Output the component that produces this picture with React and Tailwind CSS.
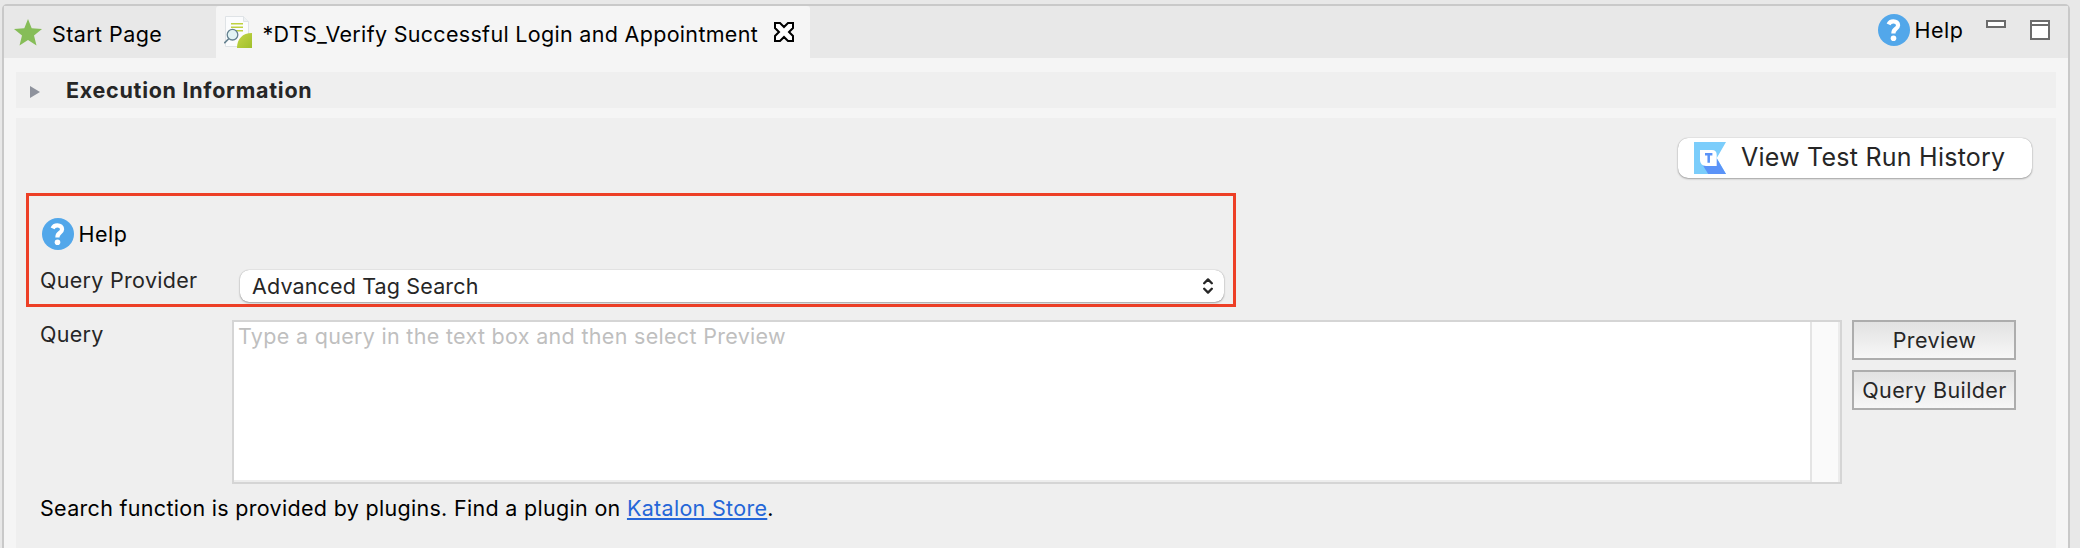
import React from "react";

function HelpIcon() {
  return (
    <svg viewBox="0 0 32 32" className="size-8 shrink-0">
      <circle cx="16" cy="16" r="16" fill="#52a7ea" />
      <path d="M10.600 10.400C11.400 8.400 13 7.400 15.400 7.400c2.900 0 4.700 1.500 4.700 3.800 0 1.800-1 2.700-2.500 3.800-1.700 1.200-2.200 2-2.200 4.400" fill="none" stroke="#fff" strokeWidth="4.200" />
      <circle cx="15.500" cy="24.300" r="2.800" fill="#fff" />
    </svg>
  );
}

function HelpLink() {
  return (
    <div className="flex items-center gap-[4.5px]">
      <HelpIcon />
      <span className="tracking-[0.5px] text-black">Help</span>
    </div>
  );
}

function StarIcon() {
  return (
    <svg viewBox="0 0 28 27" className="-mt-px h-[27px] w-7 shrink-0">
      <path d="M14 0l3.700 9.300 10.300.700-8 6.500 2.500 9.900L14 21l-8.500 5.400L8 16.500 0 10l10.300-.7z" fill="#86bd58" />
    </svg>
  );
}

function ReportIcon() {
  return (
    <svg viewBox="0 0 30 34" className="-mt-[5px] h-[34px] w-[30px] shrink-0">
      <defs>
        <linearGradient id="leaf" x1="0" y1="0" x2="1" y2="1">
          <stop offset="0" stopColor="#c5d647" />
          <stop offset="1" stopColor="#a0bf2c" />
        </linearGradient>
      </defs>
      <path d="M1.500 1.500H19.500L24.500 6.500V31.500H1.500z" fill="#fbfcfd" stroke="#dfe3e6" />
      <path d="M19.500 1.500V6.500H24.500" fill="#eef1f2" stroke="#dfe3e6" />
      <path d="M7 8.700H19M7 12.300H19M12 15.700H19" stroke="#bfd13f" strokeWidth="1.500" />
      <circle cx="8.500" cy="19.700" r="5.300" fill="#e2f3f3" stroke="#64808f" strokeWidth="1.300" />
      <path d="M4.700 23.700L.3 28.200" stroke="#64808f" strokeWidth="1.600" />
      <path d="M13 33C13 24 18.500 18 28 18V33z" fill="url(#leaf)" />
    </svg>
  );
}

function CloseIcon() {
  return (
    <svg viewBox="0 0 20 20" className="mt-0.5 size-5 shrink-0">
      <path d="M1 1H6L10 5L14 1H19V6L15 10L19 14V19H14L10 15L6 19H1V14L5 10L1 6z" fill="#fff" stroke="#000" strokeWidth="2" />
    </svg>
  );
}

function TestOpsIcon() {
  return (
    <svg viewBox="0 0 32 32" className="size-8 shrink-0">
      <path d="M0 0H32L22.800 16L32 32H0z" fill="#7bcdfb" />
      <path d="M9 23.500L14.200 32H32L22.800 16.500z" fill="#5b93f8" />
      <path d="M6 8H18Q22.700 8 22.700 13V24H12Q6 23.500 6 18z" fill="#fff" />
      <path d="M11 12.300H18.400M14.700 12.300V20.800" stroke="#5b93f8" strokeWidth="2.500" />
    </svg>
  );
}

function PlainButton({ children }) {
  return (
    <button className="flex h-10 w-[164px] items-center justify-center border-2 border-[#adadad] bg-linear-to-b from-[#e2e2e2] to-[#f7f7f7] pl-px tracking-[0.42px]">
      {children}
    </button>
  );
}

function TabBar() {
  return (
    <header className="flex h-[52px] shrink-0 bg-[#e8e8e8] text-black">
      <div className="flex w-[212px] pt-3.5 pl-2.5">
        <StarIcon />
        <span className="ml-2.5 tracking-[0.42px]">Start Page</span>
      </div>
      <div className="flex w-[594px] rounded-t-[3px] bg-[#f5f5f5] pt-3.5 pl-2">
        <ReportIcon />
        <span className="ml-[8.5px] w-[511.5px] tracking-[0.31px]">*DTS_Verify Successful Login and Appointment</span>
        <CloseIcon />
      </div>
      <div className="ml-auto flex items-start pt-2 pr-[18px]">
        <div className="w-[108px]">
          <HelpLink />
        </div>
        <div className="mt-1.5 mr-6 h-2 w-5 border-2 border-[#6b6b6b] bg-white" />
        <div className="mt-1.5 size-5 border-2 border-[#6b6b6b] bg-white">
          <div className="mt-0.5 h-0.5 bg-[#6b6b6b]" />
        </div>
      </div>
    </header>
  );
}

export default function App() {
  return (
    <div className="h-[548px] w-[2080px] overflow-hidden bg-[#e8e8e8] pt-1 pr-2.5 pl-0.5 font-['Inter','Liberation_Sans',sans-serif] text-[21.5px] leading-7 whitespace-nowrap text-[#262626]">
      <div className="flex h-[560px] flex-col rounded-t-[5px] border-2 border-[#c9c9c9] bg-[#f5f5f5]">
        <TabBar />
        <section className="mx-3 mt-3.5 flex h-9 shrink-0 items-center bg-[#efefef] pl-3.5">
          <svg viewBox="0 0 10 12" className="mt-[3px] h-3 w-2.5">
            <path d="M0 0L10 6L0 12z" fill="#8e929c" />
          </svg>
          <span className="ml-[26px] font-bold tracking-[0.72px]">Execution Information</span>
        </section>
        <main className="mx-3 mt-2.5 grow bg-[#efefef] pt-5">
          <button className="mr-6 ml-auto flex h-10 w-[354px] items-center rounded-[10px] bg-white pl-4 text-[25px] shadow-[0_0_1px_rgba(0,0,0,0.35),0_1px_2px_rgba(0,0,0,0.3)]">
            <TestOpsIcon />
            <span className="-mt-0.5 ml-[15px] tracking-[0.24px]">View Test Run History</span>
          </button>

          <div className="mt-[15px] ml-2.5 h-[114px] w-[1210px] border-3 border-[#ed3f26] pt-[22px]">
            <div className="pl-[13px]">
              <HelpLink />
            </div>
            <div className="mt-4 flex pl-[11px]">
              <label className="w-[200px] shrink-0 tracking-[0.3px]">Query Provider</label>
              <div className="mt-1 flex h-8 w-[984px] items-center justify-between rounded-[9px] bg-white pr-[11px] pl-3 shadow-[0_0_1px_rgba(0,0,0,0.35),0_1px_2px_rgba(0,0,0,0.3)]">
                <span className="tracking-[0.14px]">Advanced Tag Search</span>
                <svg viewBox="0 0 10 16" className="h-4 w-2.5" fill="none" stroke="#262626" strokeWidth="2.300" strokeLinecap="round" strokeLinejoin="round">
                  <path d="M1.200 5.200L5 1.400L8.800 5.200M1.200 10.800L5 14.600L8.800 10.800" />
                </svg>
              </div>
            </div>
          </div>

          <div className="mt-[13px] flex pl-6">
            <label className="w-48 shrink-0 tracking-[0.3px]">Query</label>
            <div className="flex h-[164px] w-[1610px] border-2 border-[#d5d5d5] bg-white">
              <div className="grow border-b-2 border-[#ededed] pl-1 tracking-[0.31px] text-[#bfbfbf]">
                Type a query in the text box and then select Preview
              </div>
              <div className="w-[30px] border-r-2 border-l-2 border-r-[#ececec] border-l-[#e4e4e4] bg-[#fafafa]" />
            </div>
            <div className="ml-2.5 flex flex-col gap-2.5">
              <PlainButton>Preview</PlainButton>
              <PlainButton>Query Builder</PlainButton>
            </div>
          </div>

          <p className="mt-2.5 pl-6 tracking-[0.305px] text-black">
            Search function is provided by plugins. Find a plugin on{" "}
            <a className="text-[#2566d8] underline decoration-2 underline-offset-2 [text-decoration-skip-ink:none]">Katalon Store</a>.
          </p>
        </main>
      </div>
    </div>
  );
}
